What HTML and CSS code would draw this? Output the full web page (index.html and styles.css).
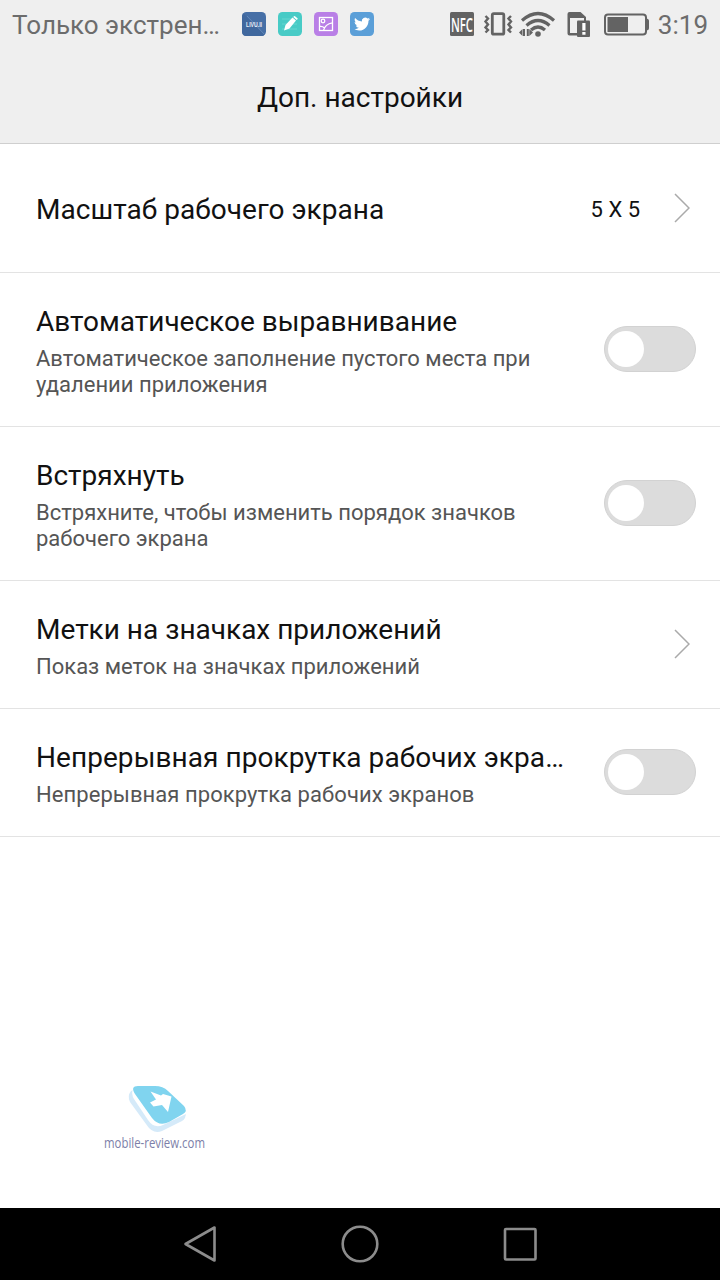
FILE: index.html
```html
<!DOCTYPE html>
<html lang="ru">
<head>
<meta charset="utf-8">
<title>Доп. настройки</title>
<link rel="stylesheet" href="styles.css">
</head>
<body>
<div class="screen">
  <header class="header">
    <div class="status">
      <span class="carrier">Только экстрен…</span>
      <div class="notifications">
        <svg class="app" viewBox="0 0 24 24">
          <rect width="24" height="24" rx="4.5" fill="#466fa6"/>
          <path d="M1.500 1.500L22.500 22.500Q21.500 24 19.500 24H4.500Q0 24 0 19.500V4.500Q0 2.500 1.500 1.500Z" fill="#40689e"/>
          <path d="M5 4L22.500 22.500" stroke="#6288b8" stroke-width="1"/>
          <text class="livui" x="4" y="14.500" textLength="16" lengthAdjust="spacingAndGlyphs">LIVU.II</text>
        </svg>
        <svg class="app" viewBox="0 0 24 24">
          <rect width="24" height="24" rx="4.5" fill="#48cbc6"/>
          <path d="M4 7H14M4 12H19M4 17H19" stroke="#70d9d4" stroke-width=".8"/>
          <path d="M6 18.500L7.500 13L14.500 5.500L18 8.500L11.500 16.500ZM15.200 4.900L16 4.200Q16.500 3.900 17 4.200L19.500 6.200Q19.900 6.700 19.500 7.200L18.700 8Z" fill="#fff"/>
        </svg>
        <svg class="app" viewBox="0 0 24 24">
          <rect width="24" height="24" rx="4.5" fill="#b97fe6"/>
          <g fill="none" stroke="#fff" stroke-width="1.3">
            <rect x="5.500" y="5.500" width="13" height="13"/>
            <circle cx="9" cy="9" r="1.800"/>
            <path d="M9.500 18.500Q11 12 18.500 10.800M5.500 14.500Q8.500 14 10.500 16"/>
          </g>
        </svg>
        <svg class="app" viewBox="0 0 24 24">
          <rect width="24" height="24" rx="4.5" fill="#5b9fd8"/>
          <path transform="translate(4 4) scale(.67)" d="M23.950 4.570a10 10 0 0 1-2.820.780 4.960 4.960 0 0 0 2.160-2.720c-.950.550-2 .950-3.120 1.180a4.920 4.920 0 0 0-8.380 4.480C7.690 8.090 4.070 6.130 1.640 3.160a4.820 4.820 0 0 0-.670 2.470c0 1.710.870 3.210 2.190 4.100a4.900 4.900 0 0 1-2.230-.620v.060a4.920 4.920 0 0 0 3.950 4.830 5 5 0 0 1-2.210.080 4.940 4.940 0 0 0 4.600 3.420A9.870 9.870 0 0 1 0 19.540a14 14 0 0 0 7.550 2.210c9.050 0 14-7.500 14-13.980 0-.210 0-.420-.020-.630a9.940 9.940 0 0 0 2.460-2.550z" fill="#fff"/>
        </svg>
      </div>
      <svg class="system" viewBox="0 0 200 28">
        <rect x="0" y="2" width="24" height="24" rx="1.5" fill="#636363"/>
        <text class="nfc" x="1" y="21.500" textLength="22" lengthAdjust="spacingAndGlyphs">NFC</text>
        <g fill="none" stroke="#636363" stroke-width="2.8">
          <rect x="42.300" y="3.700" width="11.500" height="20.500" rx="1.5"/>
          <path stroke-width="2.4" d="M35.500 6L38 8.500L35.500 11.500L38 14.500L35.500 17.500L38 20L35.500 22.500M61 6L58.500 8.500L61 11.500L58.500 14.500L61 17.500L58.500 20L61 22.500"/>
          <path stroke-width="3.2" d="M72 10.500Q88 -3.500 104 10.500M76.500 15.500Q88 5.500 99.500 15.500M81 20Q88 14 95 20"/>
        </g>
        <g fill="#636363">
          <circle cx="88" cy="24" r="2.800"/>
          <path d="M69 22.500L72.500 19V26ZM73 19H75V26H73ZM76.800 19H78.800V26H76.800ZM83 22.500L79.300 19V26Z"/>
          <path fill-rule="evenodd" d="M119.500 2H130.500L136 7V13H134V8H120V23H130V25.500H119.500Q117.500 25.500 117.500 23.500V4Q117.500 2 119.500 2Z"/>
          <rect x="127" y="10.500" width="13" height="16.500" rx="1"/>
          <path d="M132.300 13H135.500V20.500H132.300ZM132.300 22H135.500V24.800H132.300Z" fill="#fff"/>
          <rect x="157.500" y="7" width="20.500" height="15"/>
          <path d="M196 8.500Q199 8.500 199 11V18Q199 20.500 196 20.500Z"/>
        </g>
        <rect x="155" y="4.500" width="41" height="20" rx="3" fill="none" stroke="#636363" stroke-width="2"/>
      </svg>
      <span class="clock">3:19</span>
    </div>
    <h1 class="title">Доп. настройки</h1>
  </header>

  <main class="settings">
    <section class="row">
      <div class="label"><h2 class="name">Масштаб рабочего экрана</h2></div>
      <span class="value">5 X 5</span>
      <svg class="chevron" viewBox="0 0 16 30"><path d="M1 1L15 15L1 29"/></svg>
    </section>
    <section class="row tall">
      <div class="label">
        <h2 class="name">Автоматическое выравнивание</h2>
        <p class="summary">Автоматическое заполнение пустого места при<br>удалении приложения</p>
      </div>
      <span class="switch"></span>
    </section>
    <section class="row tall">
      <div class="label">
        <h2 class="name">Встряхнуть</h2>
        <p class="summary">Встряхните, чтобы изменить порядок значков<br>рабочего экрана</p>
      </div>
      <span class="switch"></span>
    </section>
    <section class="row">
      <div class="label">
        <h2 class="name">Метки на значках приложений</h2>
        <p class="summary">Показ меток на значках приложений</p>
      </div>
      <svg class="chevron" viewBox="0 0 16 30"><path d="M1 1L15 15L1 29"/></svg>
    </section>
    <section class="row">
      <div class="label loose">
        <h2 class="name">Непрерывная прокрутка рабочих экра…</h2>
        <p class="summary">Непрерывная прокрутка рабочих экранов</p>
      </div>
      <span class="switch"></span>
    </section>
  </main>

  <div class="brand">
    <svg viewBox="0 0 104 72">
      <path d="M29 6Q25 11 28 17L44 39Q51 50 60 46L80 36Q84 34 84 27L34 4Z" fill="#d5eaf9"/>
      <path d="M31 4Q29 9 32 14L46 35Q52 44 61 40L84 29V24L34 3Z" fill="#fff"/>
      <path d="M36 1H53Q61 1 66 6L82 21Q86 26 81 29L67 37Q57 42 50 33L33 9Q28 1 36 1Z" fill="#80d4ef"/>
      <path d="M48.500 6.500L59 10.500L61 9L69.500 11.500L66 27L60 20L51.500 21.500L48 17.500L54 14.500Z" fill="#fff"/>
      <text class="brand-name" x="2" y="62.500" textLength="101" lengthAdjust="spacingAndGlyphs">mobile-review.com</text>
    </svg>
  </div>

  <nav class="navbar">
    <svg viewBox="0 0 40 40"><path d="M5.500 20L34.500 3.500V36.500Z"/></svg>
    <svg viewBox="0 0 40 40"><circle cx="20" cy="20" r="17.300"/></svg>
    <svg viewBox="0 0 40 40"><rect x="5" y="5" width="30.500" height="30.500" rx="1"/></svg>
  </nav>
</div>
</body>
</html>
```
FILE: styles.css
```css
* { box-sizing: border-box; margin: 0; padding: 0; }
body {
  background: #fff;
  color: #111;
  font-family: Roboto, "Liberation Sans", sans-serif;
}
svg { display: block; flex: none; }
.screen { width: 720px; height: 1280px; display: flex; flex-direction: column; overflow: hidden; }
.header { height: 144px; background: #efefef; border-bottom: 1px solid #cfcfcf; }
.status {
  height: 50px;
  padding: 0 12px;
  display: flex;
  align-items: center;
  color: #6c6c6c;
  white-space: nowrap;
}
.carrier { width: 230px; font-size: 26px; }
.notifications { display: flex; gap: 12px; margin-top: -2px; }
.app { width: 24px; height: 24px; }
.livui { font: bold 6.5px "Liberation Sans", sans-serif; fill: #e8eef6; }
.system { width: 200px; height: 28px; margin: -2px 0 0 76px; }
.nfc { font: 600 20px "Open Sans", sans-serif; fill: #fff; }
.clock { margin-left: auto; font-size: 26px; }
.title {
  height: 93px;
  line-height: 95px;
  text-align: center;
  font-size: 28px;
  font-weight: 400;
}
.row {
  height: 128px;
  padding: 0 24px 0 36px;
  border-bottom: 1px solid #e3e3e3;
  display: flex;
  align-items: center;
}
.row:first-child { height: 129px; }
.row:first-child .label { padding-top: 3px; letter-spacing: .04px; }
.row.tall { height: 154px; }
.label { flex: 1; padding-top: 2px; white-space: nowrap; }
.loose { letter-spacing: .06px; }
.name { font-size: 28px; line-height: 38px; font-weight: 400; }
.summary { margin-top: 5px; font-size: 22px; line-height: 26px; color: #555; }
.value { font-size: 22px; margin: 3px 34px 0 0; }
.chevron { width: 16px; height: 30px; margin: 0 6px 1px 0; }
.chevron path { fill: none; stroke: #aaa; stroke-width: 1.5; }
.switch {
  width: 92px;
  height: 46px;
  margin-bottom: 1px;
  padding: 4px 3px;
  border: 1px solid #d2d2d2;
  border-radius: 23px;
  background: #dcdcdc;
}
.switch::before { content: ""; display: block; width: 36px; height: 36px; border-radius: 50%; background: #fff; }
.brand { flex: 1; padding: 248px 0 0 102px; }
.brand svg { width: 104px; height: 72px; overflow: visible; }
.brand-name { font: 14px "Open Sans", sans-serif; fill: #7c80a8; }
.navbar {
  height: 72px;
  background: #000;
  display: flex;
  justify-content: center;
  align-items: center;
  gap: 120px;
}
.navbar svg { width: 40px; height: 40px; fill: none; stroke: #8c8c8c; stroke-width: 2.6; stroke-linejoin: round; }
```
